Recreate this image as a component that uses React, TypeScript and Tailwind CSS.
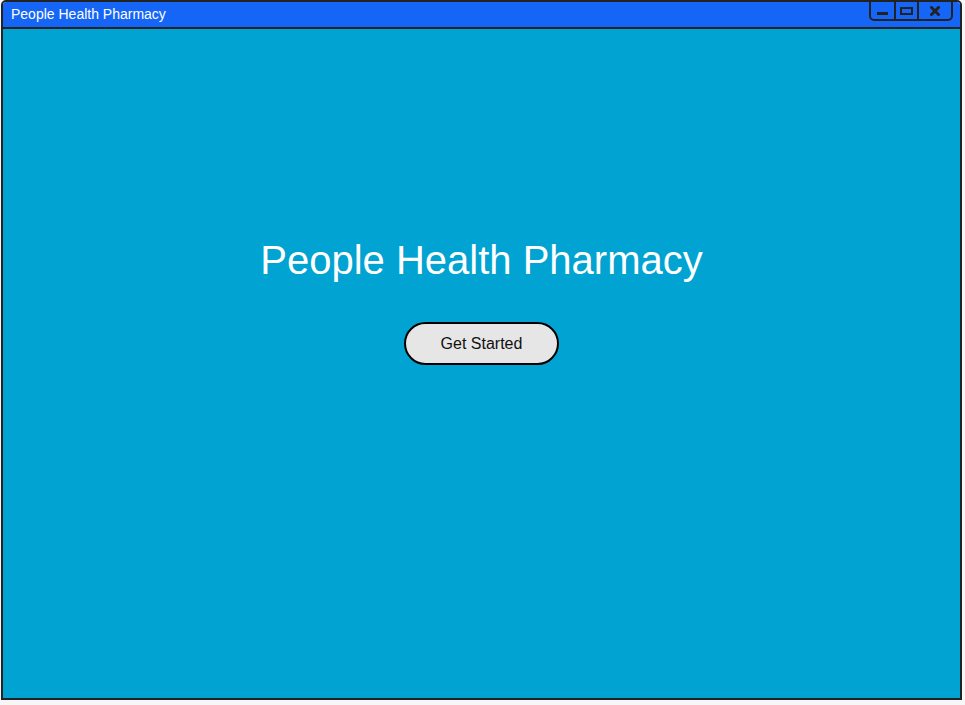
export default function App() {
  return (
    <div className="w-[965px] h-[705px] bg-[#f7f7f7] font-['Liberation_Sans',Arial,sans-serif]">
      <div className="ml-[1px] w-[961px] h-[700px] border-2 border-[#222222] rounded-t-[5px] overflow-hidden flex flex-col">
        <div className="h-[27px] shrink-0 bg-[#1565f7] border-b-2 border-[#222222] flex items-start justify-between">
          <span className="pl-[8px] pt-[4px] text-[14px] leading-[17px] text-white">People Health Pharmacy</span>
          <div className="mr-[7px] -mt-[2px] h-[21px] flex border-2 border-[#222222] rounded-b-[5px]">
            <div className="w-[23px] flex items-end justify-center pb-[4px]">
              <div className="w-[11px] h-[3px] bg-[#222222]" />
            </div>
            <div className="w-[23px] border-l-2 border-[#222222] flex items-center justify-center pt-[1px]">
              <div className="w-[13px] h-[8px] border-2 border-[#222222]" />
            </div>
            <div className="w-[34px] border-l-2 border-[#222222] flex items-center justify-center pt-[1px]">
              <svg width="10" height="10" viewBox="0 0 10 10">
                <path d="M1.5 1.5 L8.5 8.5 M8.5 1.5 L1.5 8.5" stroke="#222222" strokeWidth="3" strokeLinecap="square" />
              </svg>
            </div>
          </div>
        </div>
        <div className="flex-1 bg-[#00a3d2] flex flex-col items-center pt-[208px]">
          <h1 className="text-[40px] leading-[46px] text-white">People Health Pharmacy</h1>
          <button
            type="button"
            className="mt-[39px] w-[155px] h-[43px] rounded-full border-2 border-black bg-[#e6e6e6] text-[16px] text-[#111111]"
          >
            Get Started
          </button>
        </div>
      </div>
    </div>
  );
}
